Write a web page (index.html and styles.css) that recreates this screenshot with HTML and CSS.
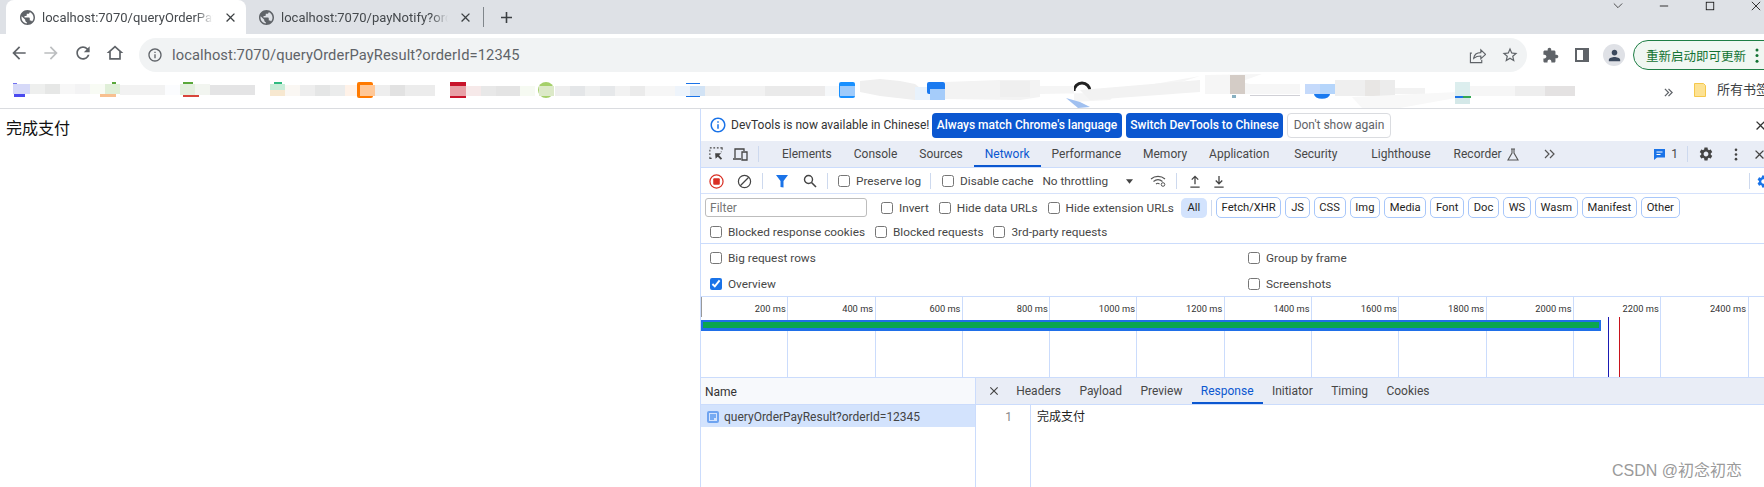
FILE: index.html
```html
<!DOCTYPE html>
<html lang="en">
<head>
<meta charset="utf-8">
<title>localhost:7070/queryOrderPayResult?orderId=12345</title>
<link rel="stylesheet" href="styles.css">
</head>
<body>
<svg class="defs" width="0" height="0" aria-hidden="true">
  <defs>
    <symbol id="i-globe" viewBox="2 2 20 20"><path d="M12 2C6.48 2 2 6.48 2 12s4.48 10 10 10 10-4.48 10-10S17.52 2 12 2zm-1 17.93c-3.95-.49-7-3.85-7-7.93 0-.62.08-1.21.21-1.79L9 15v1c0 1.1.9 2 2 2v1.93zm6.9-2.54c-.26-.81-1-1.39-1.9-1.39h-1v-3c0-.55-.45-1-1-1H8v-2h2c.55 0 1-.45 1-1V7h2c1.1 0 2-.9 2-2v-.41c2.93 1.19 5 4.06 5 7.41 0 2.08-.8 3.97-2.1 5.39z"/></symbol>
    <symbol id="i-close" viewBox="0 0 24 24"><path d="M19 6.41L17.59 5 12 10.59 6.41 5 5 6.41 10.59 12 5 17.59 6.41 19 12 13.41 17.59 19 19 17.59 13.41 12z"/></symbol>
    <symbol id="i-info" viewBox="0 0 24 24"><path d="M11 7h2v2h-2zm0 4h2v6h-2zm1-9C6.48 2 2 6.48 2 12s4.48 10 10 10 10-4.48 10-10S17.52 2 12 2zm0 18c-4.41 0-8-3.59-8-8s3.59-8 8-8 8 3.59 8 8-3.59 8-8 8z"/></symbol>
    <symbol id="i-gear" viewBox="0 0 24 24"><path d="M19.14 12.94c.04-.3.06-.61.06-.94 0-.32-.02-.64-.07-.94l2.03-1.58c.18-.14.23-.41.12-.61l-1.92-3.32c-.12-.22-.37-.29-.59-.22l-2.39.96c-.5-.38-1.03-.7-1.62-.94l-.36-2.54c-.04-.24-.24-.41-.48-.41h-3.84c-.24 0-.43.17-.47.41l-.36 2.54c-.59.24-1.13.57-1.62.94l-2.39-.96c-.22-.08-.47 0-.59.22L2.74 8.87c-.12.21-.08.47.12.61l2.03 1.58c-.05.3-.09.63-.09.94s.02.64.07.94l-2.03 1.58c-.18.14-.23.41-.12.61l1.92 3.32c.12.22.37.29.59.22l2.39-.96c.5.38 1.03.7 1.62.94l.36 2.54c.05.24.24.41.48.41h3.84c.24 0 .44-.17.47-.41l.36-2.54c.59-.24 1.13-.56 1.62-.94l2.39.96c.22.08.47 0 .59-.22l1.92-3.32c.12-.22.07-.47-.12-.61l-2.01-1.58zM12 15.6c-1.98 0-3.6-1.62-3.6-3.6s1.62-3.6 3.6-3.6 3.6 1.62 3.6 3.6-1.62 3.6-3.6 3.6z"/></symbol>
  </defs>
</svg>

<header class="tabstrip">
  <div class="tab tab-active">
    <svg class="fav"><use href="#i-globe"/></svg>
    <span class="tab-title">localhost:7070/queryOrderPayResult?orderId=12345</span>
    <svg class="tab-x"><use href="#i-close"/></svg>
  </div>
  <div class="tab tab-idle">
    <svg class="fav"><use href="#i-globe"/></svg>
    <span class="tab-title">localhost:7070/payNotify?orderId=12345</span>
    <svg class="tab-x"><use href="#i-close"/></svg>
  </div>
  <span class="tab-sep"></span>
  <svg class="plus" viewBox="0 0 14 14"><path d="M6 0h2v6h6v2H8v6H6V8H0V6h6z"/></svg>
  <div class="winctl">
    <svg class="win win-chev" viewBox="0 0 12 12"><path d="M1 3l5 5 5-5" fill="none" stroke="#333" stroke-width="1"/></svg>
    <svg class="win win-min" viewBox="0 0 12 12"><path d="M1 6h10" stroke="#111" stroke-width="1"/></svg>
    <svg class="win win-max" viewBox="0 0 12 12"><rect x="1.5" y="1.5" width="9" height="9" fill="none" stroke="#111" stroke-width="1"/></svg>
    <svg class="win win-cls" viewBox="0 0 12 12"><path d="M1 1l10 10M11 1L1 11" stroke="#111" stroke-width="1"/></svg>
  </div>
</header>

<nav class="toolbar">
  <svg class="nav nav-back" viewBox="0 0 24 24"><path d="M20 11H7.83l5.59-5.59L12 4l-8 8 8 8 1.41-1.41L7.83 13H20v-2z"/></svg>
  <svg class="nav nav-fwd" viewBox="0 0 24 24"><path d="M12 4l-1.41 1.41L16.17 11H4v2h12.17l-5.58 5.59L12 20l8-8z"/></svg>
  <svg class="nav" viewBox="0 0 24 24"><path d="M17.65 6.35C16.2 4.9 14.21 4 12 4c-4.42 0-7.99 3.58-7.99 8s3.57 8 7.99 8c3.73 0 6.84-2.55 7.73-6h-2.08c-.82 2.33-3.04 4-5.65 4-3.31 0-6-2.69-6-6s2.69-6 6-6c1.66 0 3.14.69 4.22 1.78L13 11h7V4l-2.35 2.35z"/></svg>
  <svg class="nav" viewBox="0 0 24 24"><path d="M12 5.7l5 4.5V18H7v-7.8l5-4.5M12 3L2 12h3v8h14v-8h3L12 3z"/></svg>
  <div class="omnibox">
    <svg class="omni-info"><use href="#i-info"/></svg>
    <span class="url">localhost:7070/queryOrderPayResult?orderId=12345</span>
    <svg class="omni-share" viewBox="0 0 18 18"><path d="M3 6.5H1.5v10h12v-3M5 12c.5-4 3.500-6 7.500-6V3l5 4.800-5 4.700V9.500c-3 0-5.500.8-7.500 2.500z" fill="none" stroke="#5f6368" stroke-width="1.200"/></svg>
    <svg class="omni-star" viewBox="0 0 24 24"><path d="M22 9.240l-7.190-.62L12 2 9.190 8.630 2 9.240l5.460 4.730L5.820 21 12 17.270 18.180 21l-1.630-7.030L22 9.240zM12 15.400l-3.760 2.270 1-4.280-3.320-2.880 4.380-.38L12 6.100l1.710 4.040 4.380.38-3.320 2.880 1 4.280L12 15.400z"/></svg>
  </div>
  <svg class="ext" viewBox="0 0 24 24"><path d="M20.500 11H19V7c0-1.100-.9-2-2-2h-4V3.500C13 2.120 11.880 1 10.500 1S8 2.120 8 3.500V5H4c-1.100 0-1.990.9-1.990 2v3.800H3.500c1.490 0 2.700 1.210 2.700 2.700s-1.210 2.700-2.700 2.700H2V20c0 1.100.9 2 2 2h3.800v-1.500c0-1.490 1.210-2.700 2.700-2.700 1.490 0 2.700 1.210 2.700 2.700V22H17c1.100 0 2-.9 2-2v-4h1.500c1.380 0 2.500-1.120 2.500-2.500S21.880 11 20.500 11z"/></svg>
  <svg class="side" viewBox="0 0 14 14"><path d="M0 0h14v14H0zM2 2v10h6V2z" fill-rule="evenodd"/></svg>
  <span class="avatar"><svg viewBox="0 0 24 24"><path d="M12 12c2.210 0 4-1.790 4-4s-1.790-4-4-4-4 1.790-4 4 1.790 4 4 4zm0 2c-2.670 0-8 1.340-8 4v2h16v-2c0-2.660-5.330-4-8-4z"/></svg></span>
  <div class="update"><span>重新启动即可更新</span><svg class="update-dots" viewBox="0 0 4 16"><circle cx="2" cy="2" r="1.600"/><circle cx="2" cy="8" r="1.600"/><circle cx="2" cy="14" r="1.600"/></svg></div>
</nav>

<div class="bookmarks">
  <svg class="smudge" viewBox="0 0 1660 36" width="1660" height="36" aria-hidden="true">
    <rect x="14" y="22" width="11" height="3" fill="#4a4af0"/><rect x="13" y="11" width="4" height="3" fill="#7070f0"/>
    <rect x="13" y="12" width="17" height="10" fill="#d6d9f8"/>
    <rect x="30" y="12" width="15" height="10" fill="#eeefee"/><rect x="45" y="12" width="15" height="10" fill="#e6e7e6"/>
    <rect x="60" y="12" width="15" height="10" fill="#f7f7f7"/><rect x="75" y="12" width="15" height="10" fill="#f3f3f4"/>
    <rect x="90" y="12" width="15" height="10" fill="#f8fbf4"/><rect x="105" y="12" width="15" height="10" fill="#e0efd8"/>
    <rect x="112" y="10" width="4" height="2" fill="#5aa83a"/><rect x="100" y="22" width="16" height="3" fill="#f8c090"/>
    <rect x="120" y="13" width="45" height="10" fill="#f2f2f2"/><rect x="165" y="13" width="15" height="10" fill="#fbfcfe"/>
    <rect x="183" y="10" width="10" height="2" fill="#5aa83a"/><rect x="183" y="23" width="16" height="2" fill="#d8453a"/>
    <rect x="180" y="12" width="15" height="11" fill="#e4efdf"/><rect x="195" y="12" width="15" height="11" fill="#f2f5f0"/>
    <rect x="210" y="13" width="45" height="10" fill="#e4e4e5"/>
    <rect x="274" y="10" width="8" height="2" fill="#2dbb7f"/>
    <rect x="270" y="12" width="15" height="6" fill="#c8ecd8"/><rect x="270" y="18" width="15" height="6" fill="#f7e8d0"/>
    <rect x="285" y="13" width="15" height="11" fill="#faf7f3"/><rect x="300" y="13" width="15" height="11" fill="#eeeeee"/>
    <rect x="315" y="13" width="15" height="11" fill="#e5e6e6"/><rect x="330" y="13" width="15" height="11" fill="#ebecec"/>
    <rect x="345" y="13" width="15" height="11" fill="#fff2e8"/>
    <rect x="357" y="10" width="16" height="16" rx="2" fill="#ff7a00"/><rect x="360" y="13" width="15" height="11" fill="#ffc898"/>
    <rect x="375" y="13" width="15" height="11" fill="#eeeeee"/><rect x="390" y="13" width="15" height="11" fill="#e2e2e2"/>
    <rect x="405" y="13" width="30" height="11" fill="#ececec"/>
    <rect x="450" y="10" width="16" height="16" fill="#c8132a"/><rect x="450" y="14" width="16" height="10" fill="#e8a0a6"/>
    <rect x="466" y="14" width="15" height="10" fill="#f6e9e9"/><rect x="481" y="14" width="15" height="10" fill="#e8e8e8"/>
    <rect x="496" y="14" width="24" height="10" fill="#e4e4e4"/>
    <rect x="520" y="14" width="15" height="10" fill="#f6faf2"/>
    <circle cx="546" cy="18" r="8" fill="#a5d06a"/><rect x="539" y="14" width="15" height="10" fill="#dce9c8"/>
    <rect x="555" y="14" width="15" height="10" fill="#eeeeee"/><rect x="570" y="14" width="15" height="10" fill="#e4e6e8"/>
    <rect x="585" y="14" width="15" height="10" fill="#eff0f0"/><rect x="600" y="14" width="15" height="10" fill="#e6e8ea"/>
    <rect x="615" y="14" width="15" height="10" fill="#f2f2f2"/><rect x="630" y="14" width="15" height="10" fill="#ebebeb"/>
    <rect x="645" y="14" width="30" height="10" fill="#f6f6f6"/><rect x="675" y="14" width="15" height="10" fill="#eef4fb"/>
    <rect x="686" y="11" width="14" height="1" fill="#1a73e8"/><rect x="686" y="24" width="14" height="1" fill="#1a73e8"/>
    <rect x="690" y="14" width="15" height="10" fill="#d2e3f5"/>
    <rect x="705" y="14" width="15" height="10" fill="#efefef"/><rect x="720" y="14" width="45" height="10" fill="#f2f2f2"/>
    <rect x="765" y="14" width="45" height="10" fill="#eaeaea"/><rect x="810" y="14" width="15" height="10" fill="#ecebeb"/>
    <rect x="825" y="14" width="15" height="10" fill="#f6f8fa"/>
    <rect x="839" y="10" width="16" height="16" rx="2" fill="#1890ff"/><rect x="840" y="14" width="15" height="10" fill="#9fcbfb"/>
    <polygon points="860,9 880,7 900,9 915,12 930,24 915,28 880,24 860,20" fill="#efefef"/>
    <rect x="915" y="15" width="15" height="13" fill="#e8f2fc"/>
    <rect x="927" y="10" width="18" height="12" rx="2" fill="#1a7af0"/><rect x="930" y="17" width="15" height="11" fill="#a5ccfa"/>
    <polygon points="945,10 1000,8 1040,8 1040,25 1020,28 945,27" fill="#f3f3f3"/>
    <rect x="1000" y="9" width="30" height="16" fill="#efefef"/>
    <path d="M1074 19a8 8 0 0 1 16 0" fill="none" stroke="#222" stroke-width="3"/>
    <polygon points="1040,14 1074,14 1074,30 1110,28 1120,18 1200,4 1150,20 1040,22" fill="#f5f5f5"/>
    <polygon points="1066,26 1078,36 1090,35 1080,30" fill="#a0c0f0"/>
    <polygon points="1080,18 1200,8 1200,20 1090,28" fill="#f2f2f2"/>
    <polygon points="1205,3 1262,2 1240,10 1250,12 1300,12 1300,22 1205,22" fill="#f6f6f6"/>
    <rect x="1230" y="3" width="15" height="19" fill="#d4ccc6"/>
    <rect x="1232" y="23" width="4" height="3" fill="#88b0c0"/><rect x="1250" y="23" width="50" height="1" fill="#d0d0d6"/>
    <path d="M1314 22h16a5 3 0 0 1-16 0z" fill="#1a7af0"/>
    <rect x="1305" y="12" width="15" height="10" fill="#c5dafb"/><rect x="1320" y="12" width="15" height="10" fill="#b5d5fb"/>
    <rect x="1335" y="8" width="30" height="16" fill="#efefef"/><rect x="1365" y="8" width="15" height="16" fill="#e8e6e4"/>
    <rect x="1380" y="8" width="15" height="16" fill="#ececec"/><rect x="1395" y="16" width="30" height="6" fill="#f2f2f2"/>
    <polygon points="1352,25 1500,18 1400,36 1362,36" fill="#f8f8f8"/>
    <rect x="1455" y="10" width="15" height="14" fill="#dceeee"/><rect x="1455" y="24" width="8" height="2" fill="#1a73e8"/>
    <rect x="1463" y="24" width="8" height="2" fill="#34a853"/><rect x="1455" y="26" width="15" height="6" fill="#d4e8e8"/>
    <rect x="1470" y="14" width="45" height="10" fill="#f6f6f6"/><rect x="1515" y="14" width="30" height="10" fill="#eeeeee"/>
    <rect x="1545" y="14" width="30" height="10" fill="#e4e2e2"/>
  </svg>
  <svg class="chev-more" viewBox="0 0 10 10"><path d="M1 1l4 4-4 4M5 1l4 4-4 4" fill="none" stroke="#5f6368" stroke-width="1.400"/></svg>
  <span class="bm-sep"></span>
  <svg class="folder" viewBox="0 0 12 14"><path d="M.5.5h9l2 2v11H.5z" fill="#fde293" stroke="#f5c84c"/></svg>
  <span class="bm-all">所有书签</span>
</div>

<main class="layout">
  <section class="page">完成支付</section>

  <section class="devtools">
    <div class="infobar">
      <svg class="info-ic"><use href="#i-info"/></svg>
      <span class="info-text">DevTools is now available in Chinese!</span>
      <button class="btn btn-primary btn-match">Always match Chrome's language</button>
      <button class="btn btn-primary btn-switch">Switch DevTools to Chinese</button>
      <button class="btn btn-ghost">Don't show again</button>
      <svg class="info-x"><use href="#i-close"/></svg>
    </div>

    <div class="maintabs">
      <svg class="dt-ic ic-inspect" viewBox="0 0 16 16"><path d="M1 1h2M5 1h2M9 1h2M13 1h2v2M1 3v2M1 7v2M1 11v2h2M14 5v1" fill="none" stroke="#444" stroke-width="1.200"/><path d="M7 7h7l-2.500 2.300L15 13l-1.500 1.500-3.500-3.500L7.500 13.500z" fill="#444"/></svg>
      <svg class="dt-ic ic-device" viewBox="0 0 16 14"><path d="M1 12h8M3 11V2h9v2M10 5h5v8h-5z" fill="none" stroke="#444" stroke-width="1.300"/></svg>
      <span class="vsep"></span>
      <span class="mt mt-first">Elements</span>
      <span class="mt">Console</span>
      <span class="mt">Sources</span>
      <span class="mt mt-on">Network</span>
      <span class="mt">Performance</span>
      <span class="mt">Memory</span>
      <span class="mt">Application</span>
      <span class="mt mt-sec">Security</span>
      <span class="mt mt-light">Lighthouse</span>
      <span class="mt mt-rec">Recorder</span>
      <svg class="flask" viewBox="0 0 12 13"><path d="M4 1h4M5 1v4L1 12h10L7 5V1" fill="none" stroke="#555" stroke-width="1.100"/></svg>
      <svg class="more" viewBox="0 0 12 10"><path d="M1 1l4 4-4 4M6 1l4 4-4 4" fill="none" stroke="#555" stroke-width="1.200"/></svg>
      <div class="mt-right">
        <svg class="msg" viewBox="0 0 11 11"><path d="M0 0h11v8.500H3L0 11z" fill="#1a73e8"/><path d="M2.500 3h6M2.500 5.500h4" stroke="#fff" stroke-width="1"/></svg>
        <span class="msg-n">1</span>
        <span class="vsep vsep-r"></span>
        <svg class="gear"><use href="#i-gear"/></svg>
        <svg class="kebab" viewBox="0 0 4 14"><circle cx="2" cy="2" r="1.400"/><circle cx="2" cy="7" r="1.400"/><circle cx="2" cy="12" r="1.400"/></svg>
        <svg class="dt-x"><use href="#i-close"/></svg>
      </div>
    </div>

    <div class="nettools">
      <svg class="rec" viewBox="0 0 16 16"><circle cx="8" cy="8" r="7" fill="none" stroke="#d93025" stroke-width="1.300"/><rect x="4.500" y="4.500" width="7" height="7" rx="1" fill="#d93025"/></svg>
      <svg class="clear" viewBox="0 0 16 16"><circle cx="8" cy="8" r="6.500" fill="none" stroke="#444" stroke-width="1.300"/><path d="M3.500 12.500l9-9" stroke="#444" stroke-width="1.300"/></svg>
      <span class="vsep"></span>
      <svg class="funnel" viewBox="0 0 14 14"><path d="M1 1h12L8.500 7v6.500L5.500 13V7z" fill="#1a73e8"/></svg>
      <svg class="search" viewBox="0 0 14 14"><circle cx="5.500" cy="5.500" r="4" fill="none" stroke="#444" stroke-width="1.400"/><path d="M8.500 8.500l4.500 4.500" stroke="#444" stroke-width="1.600"/></svg>
      <span class="vsep"></span>
      <label class="chk chk-preserve"><input type="checkbox">Preserve log</label>
      <span class="vsep vsep-b"></span>
      <label class="chk chk-cache"><input type="checkbox">Disable cache</label>
      <span class="throttle">No throttling</span>
      <svg class="tri" viewBox="0 0 8 5"><path d="M0 0h8L4 5z" fill="#444"/></svg>
      <svg class="wifi" viewBox="0 0 16 12"><path d="M1 4c4-3.500 10-3.500 14 0M3.500 6.500c2.700-2.300 6.300-2.300 9 0M6 9c1-.8 2.500-.8 3.500 0" fill="none" stroke="#555" stroke-width="1.100"/><circle cx="13" cy="9.500" r="1.800" fill="none" stroke="#555"/></svg>
      <span class="vsep"></span>
      <svg class="updown up" viewBox="0 0 12 14"><path d="M6 10V2M2.500 5L6 1.500 9.500 5M1 13h10" fill="none" stroke="#444" stroke-width="1.400"/></svg>
      <svg class="updown down" viewBox="0 0 12 14"><path d="M6 1v8M2.500 6L6 9.500 9.500 6M1 13h10" fill="none" stroke="#444" stroke-width="1.400"/></svg>
      <div class="nt-right">
        <span class="vsep"></span>
        <svg class="nt-gear"><use href="#i-gear"/></svg>
      </div>
    </div>

    <div class="filters">
      <div class="filter-row">
        <input class="filter-input" type="text" placeholder="Filter">
        <label class="chk chk-invert"><input type="checkbox">Invert</label>
        <label class="chk chk-data"><input type="checkbox">Hide data URLs</label>
        <label class="chk chk-ext"><input type="checkbox">Hide extension URLs</label>
        <span class="pill-all">All</span>
        <span class="vsep vsep-pill"></span>
        <span class="pill">Fetch/XHR</span>
        <span class="pill">JS</span>
        <span class="pill">CSS</span>
        <span class="pill">Img</span>
        <span class="pill">Media</span>
        <span class="pill">Font</span>
        <span class="pill">Doc</span>
        <span class="pill">WS</span>
        <span class="pill">Wasm</span>
        <span class="pill">Manifest</span>
        <span class="pill">Other</span>
      </div>
      <div class="filter-row2">
        <label class="chk"><input type="checkbox">Blocked response cookies</label>
        <label class="chk"><input type="checkbox">Blocked requests</label>
        <label class="chk"><input type="checkbox">3rd-party requests</label>
      </div>
    </div>

    <div class="settings">
      <label class="chk"><input type="checkbox">Big request rows</label>
      <label class="chk"><input type="checkbox">Group by frame</label>
      <label class="chk"><input type="checkbox" checked>Overview</label>
      <label class="chk"><input type="checkbox">Screenshots</label>
    </div>

    <div class="overview">
      <div class="tick">200 ms</div><div class="tick">400 ms</div><div class="tick">600 ms</div><div class="tick">800 ms</div>
      <div class="tick">1000 ms</div><div class="tick">1200 ms</div><div class="tick">1400 ms</div><div class="tick">1600 ms</div>
      <div class="tick">1800 ms</div><div class="tick">2000 ms</div><div class="tick">2200 ms</div><div class="tick">2400 ms</div>
      <span class="ov-start"></span>
      <span class="ov-bar"></span>
      <span class="ov-line ov-dcl"></span>
      <span class="ov-line ov-load"></span>
    </div>

    <div class="panes">
      <div class="list">
        <div class="list-head">Name</div>
        <div class="list-row">
          <svg class="doc" viewBox="0 0 12 12"><rect width="12" height="12" rx="2" fill="#6ea3f0"/><rect x="2" y="2" width="8" height="8" fill="#d3e3fd"/><path d="M3 4h6M3 6h6M3 8h4" stroke="#1a73e8" stroke-width="1"/></svg>
          <span>queryOrderPayResult?orderId=12345</span>
        </div>
      </div>
      <div class="detail">
        <div class="detail-tabs">
          <svg class="detail-x"><use href="#i-close"/></svg>
          <span class="dt">Headers</span>
          <span class="dt">Payload</span>
          <span class="dt">Preview</span>
          <span class="dt dt-on">Response</span>
          <span class="dt">Initiator</span>
          <span class="dt">Timing</span>
          <span class="dt">Cookies</span>
        </div>
        <div class="code">
          <div class="gutter">1</div>
          <div class="code-body">完成支付</div>
        </div>
      </div>
    </div>
  </section>
</main>

<div class="watermark">CSDN @初念初恋</div>
</body>
</html>
```
FILE: styles.css
```css
* { box-sizing: border-box; }
html, body { margin: 0; padding: 0; }
body {
  width: 1764px; height: 487px; overflow: hidden; position: relative; background: #fff;
  font-family: Roboto, "Noto Sans CJK SC", sans-serif; color: #333;
}
svg { display: block; flex: none; }
.defs { position: absolute; }

/* tab strip */
.tabstrip { height: 34px; background: #dee1e6; display: flex; align-items: center; }
.tab { height: 34px; width: 240px; display: flex; align-items: center; font-size: 13px; color: #45494d; flex: none; }
.tab-active { margin-left: 6px; background: #fff; border-radius: 8px 8px 0 0; padding: 0 0 0 14px; }
.tab-idle { margin-left: 5px; padding-left: 8px; }
.fav { width: 15px; height: 15px; fill: #5f6368; margin-right: 7px; }
.tab-title { width: 171px; overflow: hidden; white-space: nowrap; -webkit-mask-image: linear-gradient(to right, #000 90%, transparent); mask-image: linear-gradient(to right, #000 90%, transparent); }
.tab-idle .tab-title { width: 167px; }
.tab-x { width: 15px; height: 15px; fill: #3c4043; margin-left: 10px; }
.tab-sep { width: 1px; height: 20px; background: #80868b; margin-left: -8px; }
.plus { width: 11px; height: 11px; fill: #3c4043; margin-left: 17px; }
.winctl { margin-left: auto; align-self: flex-start; display: flex; padding-top: 1px; }
.win { width: 10px; height: 10px; }
.win-chev { margin-right: 36px; }
.win-min { margin-right: 36px; }
.win-max { margin-right: 36px; }
.win-cls { margin-right: 3px; }

/* toolbar */
.toolbar { height: 38px; display: flex; align-items: center; padding-left: 9px; background: #fff; }
.nav { width: 20px; height: 20px; fill: #5f6368; margin-right: 12px; }
.nav-fwd { fill: #bcbec0; }
.omnibox {
  flex: none; width: 1388px; height: 34px; margin: 4px 0 0 2px; background: #f1f3f4; border-radius: 17px;
  display: flex; align-items: center; padding-left: 8px;
}
.omni-info { width: 16px; height: 16px; fill: #5f6368; margin-right: 9px; }
.url { font-size: 14.700px; color: #5f6368; letter-spacing: .1px; }
.omni-share { width: 17px; height: 17px; margin-left: auto; }
.omni-star { width: 18px; height: 18px; fill: #5f6368; margin: 0 8px 0 15px; }
.ext { width: 17px; height: 17px; fill: #5f6368; margin: 4px 0 0 15px; }
.side { width: 14px; height: 14px; fill: #5f6368; margin: 4px 0 0 16px; }
.avatar { width: 22px; height: 22px; border-radius: 50%; background: #dfe1e6; margin: 4px 0 0 14px; display: flex; align-items: center; justify-content: center; flex: none; }
.avatar svg { width: 17px; height: 17px; fill: #3c4a5e; }
.update {
  width: 150px; height: 30px; margin: 4px 0 0 8px; border: 1px solid #1e7e45; border-radius: 15px; background: #f0f7f2;
  display: flex; align-items: center; padding-left: 12px; font-size: 12.500px; color: #137333; flex: none;
}
.update-dots { width: 4px; height: 15px; fill: #137333; margin-left: 9px; }

/* bookmarks */
.bookmarks { height: 37px; border-bottom: 1px solid #dadce0; display: flex; align-items: center; overflow: hidden; background: #fff; }
.smudge { margin-right: 4px; }
.chev-more { width: 9px; height: 9px; margin-top: 4px; }
.bm-sep { width: 1px; height: 18px; background: #d0d2d6; margin: 0 0 0 10px; }
.folder { width: 12px; height: 14px; margin-left: 11px; }
.bm-all { font-size: 13px; line-height: 18px; color: #3c4043; margin-left: 11px; white-space: nowrap; }

/* layout */
.layout { display: flex; height: 378px; }
.page { width: 700px; flex: none; padding: 10px 6px; font-size: 16px; line-height: 20px; color: #111; }

/* devtools */
.devtools { width: 1064px; flex: none; border-left: 1px solid #cbdcfc; font-size: 12px; color: #474747; display: flex; flex-direction: column; }
.infobar { height: 32px; flex: none; display: flex; align-items: center; padding: 0 0 0 8px; }
.info-ic { width: 18px; height: 18px; fill: #1a73e8; }
.info-text { margin-left: 4px; width: 201px; white-space: nowrap; font-size: 12px; color: #333; }
.btn { height: 25px; border-radius: 4px; font: 500 12px Roboto, sans-serif; padding: 0; white-space: nowrap; flex: none; }
.btn-primary { background: #0b57d0; border: 0; color: #fff; margin-right: 4px; }
.btn-match { width: 190px; }
.btn-switch { width: 157px; }
.btn-ghost { width: 104px; background: #fff; border: 1px solid #dadce0; color: #5f6368; font-weight: 400; }
.info-x { width: 15px; height: 15px; fill: #333; margin-left: auto; margin-right: -4px; }

.maintabs { height: 27px; flex: none; background: #e9edf6; border-bottom: 1px solid #cbdcfc; display: flex; align-items: stretch; }
.maintabs svg { align-self: center; }
.ic-inspect { width: 14px; height: 14px; margin-left: 8px; }
.ic-device { width: 16px; height: 14px; margin-left: 9px; }
.vsep { width: 1px; height: 16px; background: #cdd9ee; align-self: center; flex: none; }
.maintabs > .vsep { margin-left: 10px; }
.mt { padding: 1px 11px 0; line-height: 25px; font-size: 12px; white-space: nowrap; }
.mt-first { margin-left: 12px; }
.mt-on { color: #0b57d0; box-shadow: inset 0 -2px 0 #0b57d0; }
.mt-sec { margin-left: 3px; }
.mt-light { margin-left: 12px; }
.mt-rec { margin-left: 1px; padding-right: 5px; }
.flask { width: 12px; height: 13px; }
.more { width: 12px; height: 10px; margin-left: 25px; }
.mt-right { margin-left: auto; display: flex; align-items: center; }
.msg { width: 11px; height: 11px; }
.msg-n { margin-left: 6px; margin-right: 9px; font-size: 12px; }
.gear { width: 16px; height: 16px; fill: #444; margin-left: 10px; }
.kebab { width: 4px; height: 13px; fill: #444; margin-left: 20px; }
.dt-x { width: 15px; height: 15px; fill: #444; margin-left: 14px; margin-right: -3px; }

.nettools { height: 26px; flex: none; padding-top: 1px; border-bottom: 1px solid #d6e2fb; display: flex; align-items: center; }
.rec { width: 15px; height: 15px; margin-left: 8px; }
.clear { width: 15px; height: 15px; margin-left: 13px; }
.nettools > .vsep { margin-left: 10px; }
.funnel { width: 14px; height: 14px; margin-left: 12px; }
.search { width: 14px; height: 14px; margin-left: 14px; }
.chk { display: inline-flex; align-items: center; font-size: 11.800px; color: #474747; white-space: nowrap; flex: none; }
.chk input { margin: 0 6px 0 0; width: 12px; height: 12px; accent-color: #1a73e8; flex: none; }
.chk-preserve { margin-left: 10px; }
.nettools > .vsep-b { margin-left: 9px; }
.chk-cache { margin-left: 11px; }
.throttle { margin-left: 9px; width: 80px; flex: none; font-size: 11.800px; }
.tri { width: 7px; height: 5px; margin-left: 4px; }
.wifi { width: 16px; height: 12px; margin-left: 17px; }
.updown { width: 12px; height: 13px; }
.up { margin-left: 12px; }
.down { margin-left: 12px; }
.nt-right { margin-left: auto; display: flex; align-items: center; margin-right: -7px; }
.nt-gear { width: 15px; height: 15px; fill: #1a73e8; margin-left: 6px; }

.filters { height: 50px; border-bottom: 1px solid #cbdcfc; flex: none; padding-top: 3px; }
.filter-row { height: 21px; display: flex; align-items: center; padding-left: 4px; }
.filter-input {
  width: 162px; height: 19px; border: 1px solid #bdbdbd; border-radius: 3px; padding: 0 4px; margin: 0;
  font: 12px Roboto, sans-serif; outline: 0; flex: none;
}
.filter-input::placeholder { color: #757575; }
.chk-invert { margin-left: 14px; }
.chk-data { margin-left: 10px; }
.chk-ext { margin-left: 10px; }
.pill-all { width: 26px; height: 20px; line-height: 20px; text-align: center; background: #d3e3fd; border-radius: 5px; margin-left: 7px; font-size: 11.200px; color: #1f1f1f; flex: none; }
.filter-row > .vsep-pill { margin: 0 4px; }
.pill { height: 21px; line-height: 19px; border: 1px solid #a8c7fa; border-radius: 5px; padding: 0 4.700px; margin-right: 4px; font-size: 11.200px; color: #1f1f1f; white-space: nowrap; flex: none; }
.filter-row2 { height: 24px; margin-top: 2px; padding-left: 9px; display: flex; align-items: center; gap: 10px; }

.settings { height: 53px; border-bottom: 1px solid #cbdcfc; display: grid; grid-template-columns: 538px 1fr; grid-template-rows: 27px 26px; padding-left: 9px; align-items: center; flex: none; }

.overview { height: 81px; flex: none; border-bottom: 1px solid #cbdcfc; display: flex; position: relative; }
.tick { width: 87.300px; flex: none; border-right: 1px solid #cbdcfc; text-align: right; font-size: 9.300px; color: #333; padding: 6px 1.500px 0 0; white-space: nowrap; }
.ov-start { position: absolute; left: 0; top: 0; width: 1px; height: 20px; background: #999; }
.ov-bar { position: absolute; left: 0; top: 23px; width: 900px; height: 11px; background: #0aa64f; border: solid #1f6fe8; border-width: 2px 2px 3px 2px; }
.ov-line { position: absolute; top: 20px; bottom: 0; width: 1px; }
.ov-dcl { left: 907px; background: #1a1ab4; }
.ov-load { left: 918px; background: #c8131c; }

.panes { flex: 1; display: flex; min-height: 0; }
.list { width: 275px; flex: none; border-right: 1px solid #cbdcfc; }
.list-head { height: 27px; background: #f7f9fc; border-bottom: 1px solid #cbdcfc; line-height: 27px; padding: 1px 0 0 4px; font-size: 12px; color: #333; }
.list-row { height: 22px; background: #d3e3fd; display: flex; align-items: center; padding: 1px 0 0 6px; gap: 5px; font-size: 12px; color: #444; white-space: nowrap; }
.doc { width: 12px; height: 12px; }
.detail { flex: 1; min-width: 0; }
.detail-tabs { height: 27px; background: #e9edf6; border-bottom: 1px solid #cbdcfc; display: flex; align-items: stretch; }
.detail-x { width: 14px; height: 14px; fill: #444; align-self: center; margin: 0 6px 0 11px; }
.dt { padding: 1px 9.200px 0; line-height: 25px; font-size: 12px; }
.dt-on { color: #0b57d0; box-shadow: inset 0 -2px 0 #0b57d0; }
.code { display: flex; height: 84px; }
.gutter { width: 55px; border-right: 1px solid #cbdcfc; text-align: right; padding: 4px 18px 0 0; font-size: 12px; color: #888; line-height: 16px; height: 100%; }
.code-body { padding: 4px 0 0 6px; font-size: 12px; line-height: 16px; color: #222; }

.watermark { position: absolute; left: 1612px; top: 457px; font: 16px "Liberation Sans", "Noto Sans CJK SC", sans-serif; color: #9a9a9a; white-space: nowrap; }
```
